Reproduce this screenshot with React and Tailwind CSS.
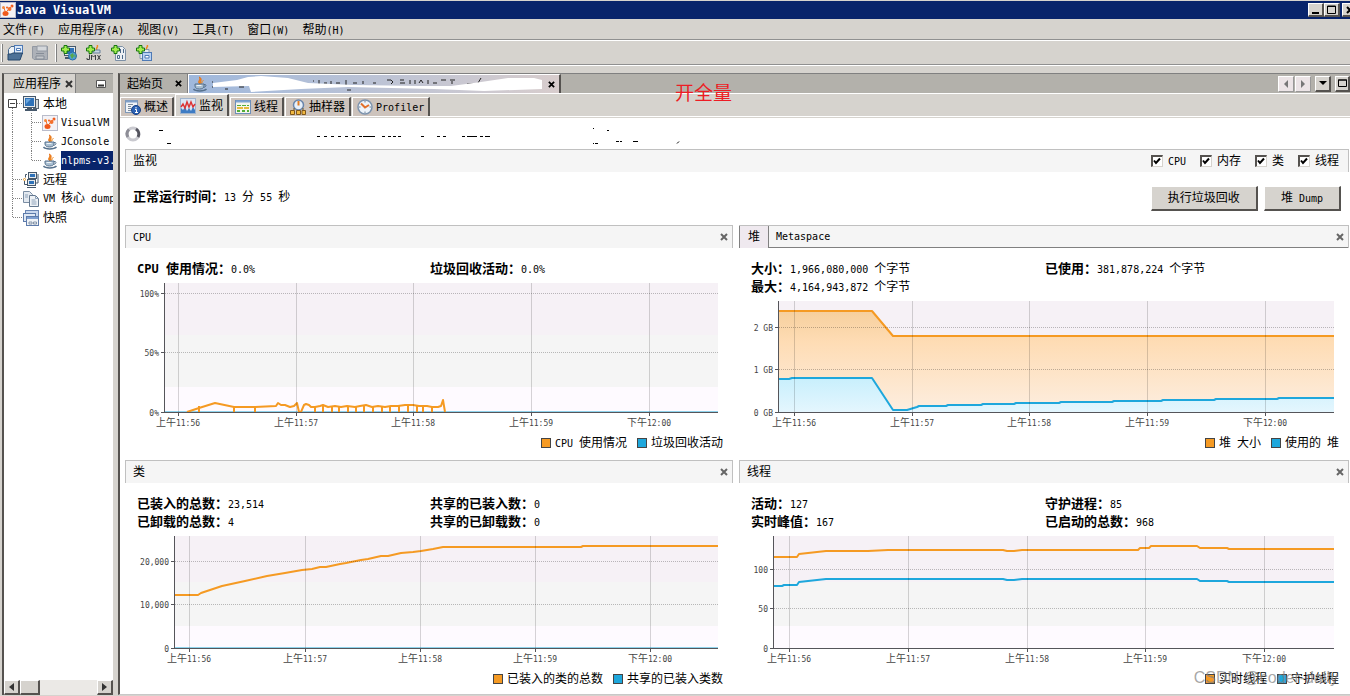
import React, { useState } from "react";

// --- TEXT ---
// Latin runs are set smaller so two of them fill one Chinese character cell
const Txt = ({ children, latin = "text-[10px]" }) =>
  String(children).split(/([\x20-\x7e]+)/).filter(Boolean).map((run, i) =>
    /^[\x20-\x7e]+$/.test(run) ? <span key={i} className={`whitespace-pre ${latin}`}>{run}</span> : <span key={i}>{run}</span>
  );

const raised = "bg-[#d6d3ce] border-t border-l border-t-white border-l-white border-r-2 border-b-2 border-r-[#55524f] border-b-[#55524f]";

// --- ICONS ---
const Svg = ({ children, className = "" }) => (
  <svg width="16" height="16" viewBox="0 0 16 16" className={`shrink-0 ${className}`} fill="none" aria-hidden="true">{children}</svg>
);

const VisualVmIcon = () => (
  <Svg>
    <rect x="0.5" y="0.5" width="15" height="15" fill="#f4f2f6" stroke="#b9bccb" />
    <ellipse cx="5.500" cy="11.500" rx="3" ry="2.500" fill="#f0591c" />
    <circle cx="3.5" cy="5.500" r="1.5" fill="#f58a3c" />
    <circle cx="7" cy="5.500" r="1" fill="#f0591c" />
    <circle cx="12" cy="4" r="1.5" fill="#f0591c" />
    <circle cx="9.500" cy="7" r="2" fill="#f4702c" />
    <path d="M5 9 4 6M6 10l3-3 3-3" stroke="#f4702c" />
  </Svg>
);

const JavaIcon = () => (
  <Svg>
    <path d="M8 8C4.500 5.500 9 4.500 7.500 1 11 3.500 7.500 5 9.500 7.500" fill="#f08a1c" stroke="#e8731a" />
    <path d="M10 7c-.5-1.500 1-2 1.500-3" stroke="#f08a1c" />
    <path d="M3 8h9v2c0 2-2 3-4.500 3S3 12 3 10z" fill="#a9bfd2" stroke="#56718c" />
    <path d="M12 8.500c3-.5 2.500 2.500-.5 3" stroke="#56718c" />
    <path d="M1.500 13c2 2.500 10.500 2.500 13 0" stroke="#56718c" strokeWidth="1.5" />
    <path d="M4.500 9.500h5" stroke="#eef4f8" />
  </Svg>
);

const Monitor = ({ x = 0, y = 0, w = 12, h = 10 }) => (
  <g>
    <rect x={x + 0.5} y={y + 0.5} width={w - 1} height={h - 1} fill="#e7eaec" stroke="#46586b" />
    <rect x={x + 2} y={y + 2} width={w - 4} height={h - 4} fill="#2f72b8" />
  </g>
);

const LocalIcon = () => (
  <Svg>
    <rect x="10.500" y="3.500" width="5" height="9" fill="#d5d8da" stroke="#5b6772" />
    <Monitor x={0} y={0} w={13} h={12} />
    <path d="M4 12.500h5M2 14h12" stroke="#46586b" strokeWidth="2" />
    <path d="M3 3h5L3 8z" fill="#6aa6de" />
  </Svg>
);

const RemoteIcon = () => (
  <Svg>
    <Monitor x={5} y={0} w={9} h={7} />
    <Monitor x={4} y={7} w={9} h={7} />
    <path d="M15 2v9h-2M4 2.500H2.500v3M4 15.500h9" stroke="#46586b" />
    <circle cx="1.500" cy="7.500" r="1" fill="#fff" stroke="#e59a2b" />
    <path d="M1.500 9v3.500H4" stroke="#46586b" />
  </Svg>
);

const DumpIcon = () => (
  <Svg>
    <path d="M.5.5h6l3 3v8h-9z" fill="#e3e9f0" stroke="#7a8da3" />
    <path d="M6.500 4.500h6l3 3v8h-9z" fill="#eef2f6" stroke="#64788f" />
    <path d="M2 4h3M2 6h3M8.500 9h4M8.500 11h5M8.500 13h5M12.500 4.500v3h3" stroke="#8fa3ba" />
  </Svg>
);

const SnapshotIcon = () => (
  <Svg>
    <rect x="2.500" y=".5" width="13" height="9" fill="#c9d8ee" stroke="#6a86b4" />
    <rect x=".5" y="3.500" width="12" height="8" fill="#dfe8f4" stroke="#5d7bab" />
    <rect x="3.500" y="6.500" width="12" height="9" fill="#f0f3f7" stroke="#5d7bab" />
    <path d="M4 8h11" stroke="#7e9fd0" strokeWidth="2" />
    <path d="M6 12h3v2H6zM10.500 12h3v2h-3z" stroke="#8494a8" />
  </Svg>
);

const OpenIcon = () => (
  <Svg>
    <path d="M1.500 10V4.500L4 1.500h3.500V10z" fill="#eef2f6" stroke="#46688e" />
    <rect x="7.500" y=".5" width="8" height="8" fill="#dbe8f8" stroke="#4f7ab5" />
    <path d="M9.500 3.500h4v2h-4z" fill="#fff" stroke="#4f7ab5" />
    <path d="M1 15V9h3l2-1h9.500L13 15z" fill="#4d7197" stroke="#24466b" />
  </Svg>
);

const SaveIcon = () => (
  <Svg>
    <path d="M.5 1.500h15v13H2l-1.500-1.500z" fill="#adb1b8" stroke="#9298a2" />
    <path d="M5 1h10v5H5z" fill="#d4d7db" stroke="#9298a2" />
    <path d="M4 8.500h8M4 11h8v3H4z" fill="#c4c7cb" stroke="#858c97" />
  </Svg>
);

const Plus = () => <path d="M3 .5h3v2.500h2.500v3H6v2.500H3V6H.5V3H3z" fill="#a4ee4e" stroke="#17770f" />;

const AddRemoteIcon = () => (
  <Svg>
    <Monitor x={3} y={1} w={12} h={10} />
    <path d="M4 13h6" stroke="#46586b" strokeWidth="2" />
    <circle cx="11.500" cy="11" r="4" fill="#4fa0dc" stroke="#2b6ca5" />
    <path d="M9 10l3-2 1 3-2 3zM13 9l2 2-1 2z" fill="#59a84a" />
    <Plus />
  </Svg>
);

const AddJmxIcon = () => (
  <Svg>
    <path d="M11 0c2 2-2 3 0 5" stroke="#f08a1c" strokeWidth="1.5" />
    <path d="M7 5h7v3H7z" fill="#c6d5e4" stroke="#68829c" />
    <path d="M3.500 9.500v5H1V13M5.500 15v-5l2 2 2-2v5M11.500 10l3 5M14.500 10l-3 5" stroke="#3c3f42" />
    <Plus />
  </Svg>
);

const AddDumpIcon = () => (
  <Svg>
    <path d="M4.500 1.500h7l3 3v11h-10z" fill="#eceff3" stroke="#7d90a6" />
    <path d="M9.500 4v4M12.500 4v4" stroke="#4c6a8a" />
    <path d="M6.500 10.500h2v3h-2zM11.500 10v4" stroke="#4c6a8a" />
    <Plus />
  </Svg>
);

const AddSnapshotIcon = () => (
  <Svg>
    <path d="M4 4.500h9v9H4z" fill="#e6ebf1" stroke="#8599b0" />
    <path d="M11 0c2 2-2 2.500 0 4" stroke="#f08a1c" strokeWidth="1.5" />
    <rect x="6.500" y="7.500" width="9" height="8" fill="#b9d2f2" stroke="#4f7ab5" />
    <path d="M9 10.500h4v2.500H9z" fill="#fff" stroke="#4f7ab5" />
    <Plus />
  </Svg>
);

const OverviewIcon = () => (
  <Svg>
    <rect x=".5" y="1.500" width="12" height="12" fill="#f1f4f8" stroke="#7e98b8" />
    <path d="M1 2.500h11" stroke="#7e9fc9" strokeWidth="2" />
    <path d="M3 5.500h5M3 7.500h3M3 9.500h3M3 11.500h3" stroke="#7c8b9b" />
    <circle cx="11" cy="11" r="4.500" fill="#2c62b4" stroke="#163f83" />
    <path d="M11 8v1.500M10 10.500h1.500V14M10 13.500h3" stroke="#fff" />
  </Svg>
);

const MonitorTabIcon = () => (
  <Svg>
    <rect x=".5" y=".5" width="15" height="15" fill="#dbe6f4" stroke="#a0b4cc" />
    <path d="M1 15V10l2 2 2-3 2 4 2-3 2 3 2-4 2 3v3z" fill="#3e7cc4" />
    <path d="M1 9l2-3 2 4 2-6 2 5 2-5 2 5 2-3" stroke="#dd3434" strokeWidth="1.500" />
  </Svg>
);

const ThreadsIcon = () => (
  <Svg>
    <rect x=".5" y="1.500" width="15" height="13" fill="#f6f6ee" stroke="#6d8fba" />
    <path d="M1 2.500h14" stroke="#7fa3d3" strokeWidth="2" />
    <path d="M2 6.500h12" stroke="#53ad39" strokeDasharray="4 1" />
    <path d="M2 9h12" stroke="#e7b93c" strokeWidth="2" strokeDasharray="6 1" />
    <path d="M2 12h12" stroke="#53ad39" strokeWidth="2" strokeDasharray="3 2" />
  </Svg>
);

const SamplerIcon = () => (
  <Svg>
    <circle cx="8.500" cy="6" r="5" fill="#e7f0fa" stroke="#6a86ac" strokeWidth="1.500" />
    <path d="M8.500 2v4.500" stroke="#e07c22" strokeWidth="2" />
    <path d="M4 9v2M13 9v2" stroke="#6c5426" />
    <path d="M.5 11.500h4v4h-4zM6.500 11.500h4v4h-4zM12 11.500h3.500v4H12z" fill="#f0b840" stroke="#80571a" />
  </Svg>
);

const ProfilerIcon = () => (
  <Svg>
    <circle cx="8" cy="8" r="7" fill="#eef4fa" stroke="#7d93ad" strokeWidth="1.5" />
    <path d="M8 2v1.500M8 12.500V14M2 8h1.500M12.500 8H14" stroke="#6b8097" />
    <path d="M4 4.500l4 4L12 6" stroke="#e2702a" strokeWidth="2" />
  </Svg>
);

const Cross = ({ className = "" }) => (
  <svg width="8" height="8" viewBox="0 0 8 8" className={className} aria-hidden="true"><path d="M1 1l6 6M7 1 1 7" stroke="currentColor" strokeWidth="2" /></svg>
);

// --- CHARTS ---
const ORANGE = "#f59a23";
const BLUE = "#1ea7dc";

const charts = {
  cpu: {
    width: 553, height: 129, bands: [52, 52, 25],
    yTicks: [["100%", 10], ["50%", 69], ["0%", 129]],
    xTicks: [13, 131, 248, 366, 484],
    lines: [
      { color: ORANGE, points: "22,129 34,125 50,120 69,124 90,124 111,123 113,120 116,122 120,122 125,124 129,123 132,120 134,129 136,129 139,122 141,121 144,122 146,124 150,124 155,123 158,122 163,124 170,123 176,124 182,123 190,124 195,123 201,122 207,124 213,123 220,124 226,123 233,123 240,122 248,122 254,123 262,123 267,124 273,124 276,123 278,117 280,129" },
    ],
    stubs: [34, 69, 90, 150, 158, 167, 174, 183, 191, 199, 208, 217, 225, 234, 243, 252, 258, 267],
    floor: true,
  },
  heap: {
    width: 555, height: 111, bands: [45, 44, 22],
    yTicks: [["2 GB", 26], ["1 GB", 68], ["0 GB", 111]],
    xTicks: [15, 133, 250, 368, 486],
    lines: [
      { color: ORANGE, fill: "url(#heapSize)", points: "0,10 93,10 114,35 555,35" },
      { color: BLUE, fill: "url(#heapUsed)", points: "0,78 10,78 13,77 93,77 114,109 128,109 138,106 140,105 167,105 169,104 202,104 204,103 235,103 237,102 280,102 282,101 333,101 335,100 382,100 384,99 435,99 437,98 498,98 500,97 555,97" },
    ],
  },
  classes: {
    width: 543, height: 112, bands: [46, 44, 22],
    yTicks: [["20,000", 25], ["10,000", 68], ["0", 112]],
    xTicks: [14, 130, 245, 360, 475],
    lines: [
      { color: ORANGE, points: "0,59 23,59 26,57 35,54 47,50 70,45 92,40 110,37 127,34 137,33 145,31 151,31 165,28 171,27 186,24 193,23 206,20 213,20 226,17 238,16 246,15 258,13 268,11 406,11 408,10 543,10" },
    ],
    floor: true,
  },
  threads: {
    width: 560, height: 112, bands: [46, 44, 22],
    yTicks: [["100", 33], ["50", 72], ["0", 112]],
    xTicks: [15, 134, 253, 371, 490],
    lines: [
      { color: ORANGE, points: "0,21 23,21 25,18 52,15 94,15 114,14 229,14 233,15 240,15 248,14 364,14 366,12 375,12 377,10 423,10 426,12 453,12 455,13 560,13" },
      { color: BLUE, points: "0,50 8,50 10,49 23,49 25,46 52,43 229,43 233,44 240,44 248,43 423,43 426,45 453,45 455,46 560,46" },
    ],
  },
};

const times = [["上午", "11:56"], ["上午", "11:57"], ["上午", "11:58"], ["上午", "11:59"], ["下午", "12:00"]];
const bandColors = ["#f6f1f6", "#f5f5f5", "#fefaff"];

const Chart = ({ chart, label }) => {
  const { width, height, bands, yTicks, xTicks, lines, stubs = [], floor } = chart;
  const pct = (x) => `${(x / width) * 100}%`;
  return (
    <svg width="100%" height={height + 1} className="block overflow-visible" role="img" aria-label={label}>
      <defs>
        <linearGradient id="heapSize" x1="0" y1="0" x2="0" y2="1"><stop offset="0" stopColor="#f6cf9d" /><stop offset=".3" stopColor="#fedcb4" /><stop offset="1" stopColor="#fdeee0" /></linearGradient>
        <linearGradient id="heapUsed" x1="0" y1="0" x2="0" y2="1"><stop offset="0" stopColor="#c8effc" /><stop offset="1" stopColor="#e4f6fe" /></linearGradient>
      </defs>
      {bands.map((h, i) => (
        <rect key={i} x="0" width="100%" y={bands.slice(0, i).reduce((a, b) => a + b, 0)} height={h} fill={bandColors[i]} />
      ))}
      <svg x="0" y="0" width="100%" height={height} viewBox={`0 0 ${width} ${height}`} preserveAspectRatio="none">
        {floor && <path d={`M0 ${height - 0.5}H${width}`} stroke="#8fd3ec" />}
        {lines.map((l) => (
          <g key={l.color}>
            {l.fill && <polygon points={`0,${height} ${l.points} ${width},${height}`} fill={l.fill} />}
            <polyline points={l.points} fill="none" stroke={l.color} strokeWidth="2" strokeLinejoin="round" vectorEffect="non-scaling-stroke" />
          </g>
        ))}
        {stubs.map((x) => <path key={x} d={`M${x} 123V${height}`} stroke={ORANGE} strokeWidth="2" />)}
      </svg>
      <g shapeRendering="crispEdges" stroke="#000" strokeOpacity=".16">
        {yTicks.slice(0, -1).map(([t, y]) => <line key={t} x1="0" x2="100%" y1={y + 0.5} y2={y + 0.5} strokeDasharray="1 1" strokeOpacity=".25" />)}
        {xTicks.map((x) => <line key={x} x1={pct(x)} x2={pct(x)} y1="0" y2={height} />)}
      </g>
      <g shapeRendering="crispEdges" stroke="#55555a">
        <line x1="-0.5" x2="-0.5" y1="0" y2={height + 1} />
        <line x1="-1" x2="100%" y1={height + 0.5} y2={height + 0.5} />
        {yTicks.map(([t, y]) => <line key={t} x1="-4" x2="0" y1={y + 0.5} y2={y + 0.5} />)}
        {xTicks.map((x) => <line key={x} x1={pct(x)} x2={pct(x)} y1={height} y2={height + 4} />)}
      </g>
      <g fill="#444">
        {yTicks.map(([t, y]) => <text key={t} x="-6" y={y + 4} textAnchor="end" className="text-[8px]">{t}</text>)}
        {xTicks.map((x, i) => (
          <text key={x} x={pct(x)} y={height + 14} textAnchor="middle" className="text-[10px]">
            {times[i][0]}<tspan className="text-[8px]">{times[i][1]}</tspan>
          </text>
        ))}
      </g>
    </svg>
  );
};

const Legend = ({ items }) => (
  <div className="mt-[22px] flex h-4 items-center justify-end gap-[10px] pr-[10px]">
    {items.map((t, i) => (
      <span key={t} className="flex h-4 items-center gap-1">
        <span className={`h-[10px] w-[10px] border border-[#444] ${i === 0 ? "bg-[#f59a23]" : "bg-[#1ea7dc]"}`} />
        <span><Txt>{t}</Txt></span>
      </span>
    ))}
  </div>
);

const Stat = ({ name, value, className = "" }) => (
  <div className={`h-[18px] leading-[18px] whitespace-nowrap ${className}`}>
    <span className="text-[13px] font-bold"><Txt latin="text-[12px]">{name}</Txt></span><Txt>{value}</Txt>
  </div>
);

const Panel = ({ title, tabs, stats, chart, gutter, legend, onClose }) => (
  <section className="min-w-0">
    <header className={`flex h-[23px] items-stretch border-t border-r border-[#c0c0c0] bg-[#f5f5f5] ${tabs ? "" : "border-l"}`}>
      {tabs ? (
        <>
          <button className="w-[30px] border-x border-[#808080] bg-[#efe9ef]">{tabs[0]}</button>
          <button className="flex-1 border-b border-[#808080] pl-[7px] text-left"><Txt>{tabs[1]}</Txt></button>
        </>
      ) : (
        <h2 className="flex-1 pl-[7px] leading-[22px]"><Txt>{title}</Txt></h2>
      )}
      <button aria-label="关闭" onClick={onClose} className={`flex w-4 items-center justify-center text-[#666] ${tabs ? "border-b border-[#808080]" : ""}`}><Cross /></button>
    </header>
    <div className="mb-[5px] grid grid-cols-2 pt-3">
      {stats.map(([name, value], i) => <Stat key={name} name={name} value={value} className={i % 2 ? "pl-px" : "pl-3"} />)}
    </div>
    <div className={`pr-[15px] ${gutter}`}><Chart chart={chart} label={title} /></div>
    <Legend items={legend} />
  </section>
);

// --- DATA ---
const menus = ["文件(F)", "应用程序(A)", "视图(V)", "工具(T)", "窗口(W)", "帮助(H)"];

const tree = [
  { name: "本地", Icon: LocalIcon, lines: "M12.500 14v5M17 9.500h6", open: true },
  { name: "VisualVM", Icon: VisualVmIcon, child: true, lines: "M12.500 0v19M31.500 0v19M32 9.500h10" },
  { name: "JConsole", Icon: JavaIcon, child: true, lines: "M12.500 0v19M31.500 0v19M32 9.500h10" },
  { name: "nlpms-v3.", Icon: JavaIcon, child: true, selected: true, lines: "M12.500 0v19M31.500 0v10M32 9.500h10" },
  { name: "远程", Icon: RemoteIcon, lines: "M12.500 0v19M13 9.500h10" },
  { name: "VM 核心 dumps", Icon: DumpIcon, lines: "M12.500 0v19M13 9.500h10" },
  { name: "快照", Icon: SnapshotIcon, lines: "M12.500 0v10M13 9.500h10" },
];

const views = [
  { name: "概述", Icon: OverviewIcon },
  { name: "监视", Icon: MonitorTabIcon },
  { name: "线程", Icon: ThreadsIcon },
  { name: "抽样器", Icon: SamplerIcon },
  { name: "Profiler", Icon: ProfilerIcon },
];

const panels = [
  { id: "CPU", title: "CPU", chart: charts.cpu, gutter: "pl-[40px]", legend: ["CPU 使用情况", "垃圾回收活动"], stats: [["CPU 使用情况：", "0.0%"], ["垃圾回收活动：", "0.0%"]] },
  { id: "内存", title: "堆", tabs: ["堆", "Metaspace"], chart: charts.heap, gutter: "pl-[40px]", legend: ["堆 大小", "使用的 堆"], stats: [["大小：", "1,966,080,000 个字节"], ["已使用：", "381,878,224 个字节"], ["最大：", "4,164,943,872 个字节"]] },
  { id: "类", title: "类", chart: charts.classes, gutter: "pl-[50px]", legend: ["已装入的类的总数", "共享的已装入类数"], stats: [["已装入的总数：", "23,514"], ["共享的已装入数：", "0"], ["已卸载的总数：", "4"], ["共享的已卸载数：", "0"]] },
  { id: "线程", title: "线程", chart: charts.threads, gutter: "pl-[35px]", legend: ["实时线程", "守护线程"], stats: [["活动：", "127"], ["守护进程：", "85"], ["实时峰值：", "167"], ["已启动的总数：", "968"]] },
];

const Check = ({ name, checked, onChange }) => (
  <label className="flex items-center gap-[5px]">
    <span className="grid h-3 w-3">
      <input type="checkbox" checked={checked} onChange={onChange} className="col-start-1 row-start-1 h-3 w-3 appearance-none border-t-2 border-l-2 border-r border-b border-t-[#55524f] border-l-[#55524f] border-r-[#d6d3ce] border-b-[#d6d3ce] bg-white" />
      {checked && <svg viewBox="0 0 12 12" className="pointer-events-none col-start-1 row-start-1 h-3 w-3"><path d="M3 5.500 5 8l4-4.500" fill="none" stroke="#000" strokeWidth="2" /></svg>}
    </span>
    <span><Txt>{name}</Txt></span>
  </label>
);

const Sidebar = () => (
  <aside className="flex w-[111px] shrink-0 flex-col overflow-hidden border-t border-l-2 border-t-[#808080] border-l-[#55524f] bg-white">
    <div className="flex h-5 shrink-0 items-stretch border-b border-white bg-[#b3b1ab]">
      <div className="flex w-[72px] items-center gap-1 border-r border-[#808080] bg-[#d6d3ce] pl-[9px] whitespace-nowrap">
        <span>应用程序</span><button aria-label="关闭" className="text-[#333]"><Cross /></button>
      </div>
      <button aria-label="最小化" className="ml-auto mr-[7px] self-center">
        <svg width="10" height="8" viewBox="0 0 10 8" className="block"><path d="M.5.5h9v7h-9z" fill="#fff" stroke="#555" /><path d="M2 5.500h6" stroke="#333" strokeWidth="2" /></svg>
      </button>
    </div>
    <ul className="flex-1">
      {tree.map(({ name, Icon, lines, child, selected, open }) => (
        <li key={name} className="flex h-[19px] items-center">
          <svg viewBox={child ? "4 0 38 19" : "4 0 19 19"} className={`h-[19px] shrink-0 ${child ? "w-[38px]" : "w-[19px]"}`}>
            <path d={lines} stroke="#808080" strokeDasharray="1 1" fill="none" />
            {open && <path d="M8.500 5.500h8v8h-8zM10 9.500h5" fill="#fff" stroke="#444" />}
          </svg>
          <Icon />
          <span className={`ml-[3px] whitespace-nowrap ${child ? "flex-1 leading-[18px]" : "pl-px"} ${selected ? "bg-[#08246b] text-white" : ""}`}><Txt>{name}</Txt></span>
        </li>
      ))}
    </ul>
    <div className="flex h-[15px] shrink-0 bg-[#ebe9e6]">
      <button aria-label="向左滚动" className={`flex w-4 items-center justify-center ${raised}`}><svg width="5" height="8"><path d="M5 0v8L0 4z" fill="#333" /></svg></button>
      <div className={`w-5 ${raised}`} />
      <button aria-label="向右滚动" className={`ml-auto flex w-4 items-center justify-center ${raised}`}><svg width="5" height="8"><path d="M0 0v8l5-4z" fill="#333" /></svg></button>
    </div>
  </aside>
);

const DocumentTabs = () => (
  <div className="flex h-5 items-stretch border-b border-white bg-[#b3b1ab]">
    <div className="flex w-[68px] items-center justify-between border-r border-[#808080] pr-[5px] pl-[7px]">
      <span>起始页</span><button aria-label="关闭"><Cross className="h-[7px] w-[7px]" /></button>
    </div>
    <div className="flex w-[373px] items-center border-t border-l border-r-2 border-t-white border-l-white border-r-[#55524f] bg-linear-to-r from-[#9fb8dc] to-[#d8cdcd] pr-1 pl-[3px]">
      <JavaIcon />
      <svg width="340" height="18" viewBox="207 75 340 18" aria-hidden="true">
        <path d="M312 81h1M318 80v4M323 83h3M330 81v3M335 83h4M345 80v5M352 83h4M362 81v3M372 83h3M386 80h4l2 2-2 2M399 80h4M399 83h5M409 80v4M414 80v4M418 83l2-3 2 3M427 80v4M432 83h4M440 80h5M449 80h5M451 81v3M466 84h6M480 78l-3 5M534 79l2 4" stroke="#222" fill="none" />
        <path d="M212 83l24-3 11-3 13-1 27 2 20 5 46 2 67 1h30l30-4 27-4h26l8 2v9l-58 2-50-2-86-2-47 2-50 3-2-6-36 1z" fill="#fff" />
        <path d="M211 82h1M211 87h1M224 89h3M238 87h5M346 90h4" stroke="#222" />
      </svg>
      <button aria-label="关闭" className="ml-auto"><Cross className="h-[7px] w-[7px]" /></button>
    </div>
    <div className="ml-auto flex items-center">
      <button aria-label="上一个" className="flex h-4 w-4 items-center justify-center border border-t-white border-l-white border-r-[#999] border-b-[#999] bg-[#ece4e6]"><svg width="4" height="8"><path d="M4 0v8L0 4z" fill="#777" /></svg></button>
      <button aria-label="下一个" className="ml-px flex h-4 w-4 items-center justify-center border border-t-white border-l-white border-r-[#999] border-b-[#999] bg-[#ece4e6]"><svg width="4" height="8"><path d="M0 0v8l4-4z" fill="#777" /></svg></button>
      <button aria-label="列表" className={`ml-1 flex h-4 w-4 items-center justify-center ${raised}`}><svg width="8" height="4"><path d="M0 0h8L4 4z" fill="#000" /></svg></button>
      <button aria-label="最大化" className={`ml-1 flex h-4 w-[15px] items-center justify-center ${raised}`}><svg width="9" height="8"><path d="M.5 1h8v6.500h-8zM0 1h9" fill="none" stroke="#000" /></svg></button>
    </div>
  </div>
);

export default function App() {
  const [view, setView] = useState("监视");
  const [shown, setShown] = useState({ CPU: true, 内存: true, 类: true, 线程: true });
  const toggle = (id) => setShown({ ...shown, [id]: !shown[id] });

  return (
    <div lang="zh-CN" className="relative flex min-h-screen flex-col overflow-hidden bg-[#d6d3ce] font-['DejaVu_Sans_Mono','Noto_Sans_CJK_SC',monospace] text-[12px] leading-4 text-black">
      {/* Title bar */}
      <div className="flex h-[19px] items-center border-t border-[#d6d3ce] bg-[#08246b] text-white">
        <VisualVmIcon />
        <h1 className="pl-px text-[12px] font-bold">Java VisualVM</h1>
        <div className="-mr-2 ml-auto flex text-black">
          <button aria-label="最小化" className={`flex h-[14px] w-4 items-end justify-center pb-px ${raised}`}><svg width="7" height="2"><path d="M0 0h7v2H0z" /></svg></button>
          <button aria-label="最大化" className={`flex h-[14px] w-4 items-center justify-center ${raised}`}><svg width="9" height="9"><path d="M.5 1h8v7.500h-8zM0 1.500h9" fill="none" stroke="#000" /></svg></button>
          <button aria-label="关闭" className={`ml-[2px] flex h-[14px] w-4 items-center justify-center ${raised}`}><Cross /></button>
        </div>
      </div>
      <nav className="flex h-[21px] items-center gap-[13px] border-b border-[#909090] pt-[2px] pl-[3px]">
        {menus.map((m) => <button key={m} className="whitespace-nowrap"><Txt>{m}</Txt></button>)}
      </nav>
      <div className="flex h-[25px] items-center border-t border-b border-t-white border-b-[#909090] pl-px">
        <span className="mr-1 h-[18px] w-[2px] border-l border-white bg-[#808080]" />
        <div className="flex gap-[9px]">
          <button aria-label="打开"><OpenIcon /></button>
          <button aria-label="保存" disabled><SaveIcon /></button>
        </div>
        <span className="mr-1 ml-[7px] h-[18px] w-[2px] border-l border-white bg-[#808080]" />
        <div className="flex gap-[9px]">
          <button aria-label="添加远程主机"><AddRemoteIcon /></button>
          <button aria-label="添加 JMX 连接"><AddJmxIcon /></button>
          <button aria-label="添加 VM 核心 dump"><AddDumpIcon /></button>
          <button aria-label="添加快照"><AddSnapshotIcon /></button>
        </div>
      </div>
      <div className="h-2 border-t border-white" />

      <div className="flex flex-1 gap-[5px] pb-px pl-[2px]">
        <Sidebar />
        <main className="flex min-w-0 flex-1 flex-col border-t border-b border-l-2 border-t-[#808080] border-b-[#c8c8c8] border-l-[#55524f] bg-white">
          <DocumentTabs />
          <div className="flex h-6 items-end border-b border-[#d6d3ce] bg-[#d6d3ce]">
            <div className="flex h-full w-full items-end border-b border-white">
              {views.map(({ name, Icon }) => (
                <button
                  key={name}
                  onClick={() => setView(name)}
                  className={`mr-px flex items-center gap-[3px] border-t border-l border-r-2 border-t-white border-l-white border-r-[#55524f] px-1 whitespace-nowrap ${view === name ? "h-[22px] bg-[#d6d3ce]" : "h-[19px] bg-[#cdc3bc]"}`}
                >
                  <Icon /><span><Txt>{name}</Txt></span>
                </button>
              ))}
            </div>
          </div>

          <div className="flex h-[31px] items-center gap-2 pl-[5px]">
            <svg width="16" height="16" viewBox="0 0 16 16" fill="none" strokeWidth="3" aria-hidden="true">
              <circle cx="8" cy="8" r="6" stroke="#c9c9cf" />
              <path d="M3 11a6 6 0 0 1 1-7.500" stroke="#8d8d96" />
              <path d="M11 3a6 6 0 0 1 2 8" stroke="#55555f" />
            </svg>
            <svg width="540" height="22" viewBox="149 123 540 22" aria-hidden="true">
              <path d="M159 130.500h4M167 143.500h4" stroke="#000" />
              <path d="M317 136.500h46" stroke="#000" strokeDasharray="3 4" />
              <path d="M363 136.500h12M382 136.500h3M388 136.500h3M393 136.500h3M398 136.500h3M421 136.500h3M437 136.500h3M443 136.500h3M462 136.500h3M467 136.500h10M480 136.500h3M485 136.500h5" stroke="#000" />
              <path d="M593 128.500h1M607 130.500h2M593 143.500h1M595 143.500h3M616 141.500h3M620 141.500h2M633 141.500h5M677 143.500l2-2" stroke="#000" />
            </svg>
          </div>

          <div className="pr-px pb-[7px] pl-[5px]">
            <div className="flex h-[23px] items-center border-t border-r border-l border-[#c0c0c0] bg-[#f5f5f5] pr-[9px] pl-[7px]">
              <h2>监视</h2>
              <div className="ml-auto flex gap-[14px]">
                {panels.map(({ id }) => <Check key={id} name={id} checked={shown[id]} onChange={() => toggle(id)} />)}
              </div>
            </div>
            <div className="flex h-[53px] items-center gap-[6px] pr-2 pl-2">
              <Stat name="正常运行时间：" value="13 分 55 秒" className="mr-auto mb-1" />
              <button className={`h-[25px] px-4 whitespace-nowrap ${raised}`}><Txt>执行垃圾回收</Txt></button>
              <button className={`h-[25px] px-4 whitespace-nowrap ${raised}`}><Txt>堆 Dump</Txt></button>
            </div>
            <div className="grid grid-cols-[608fr_610fr] gap-x-[6px] gap-y-[9px]">
              {panels.filter((p) => shown[p.id]).map((p) => <Panel key={p.id} {...p} onClose={() => toggle(p.id)} />)}
            </div>
          </div>
        </main>
      </div>

      {/* Notes laid over the window */}
      <p className="pointer-events-none absolute top-[81px] left-1/2 font-['Noto_Sans_CJK_SC',sans-serif] text-[19px] leading-[22px] text-[#ed1c24]">开全量</p>
      <p className="pointer-events-none absolute right-3 bottom-2 font-['Liberation_Sans',sans-serif] text-[16px] leading-5 text-[#808080]/70">CSDN @coder-daily</p>
    </div>
  );
}
